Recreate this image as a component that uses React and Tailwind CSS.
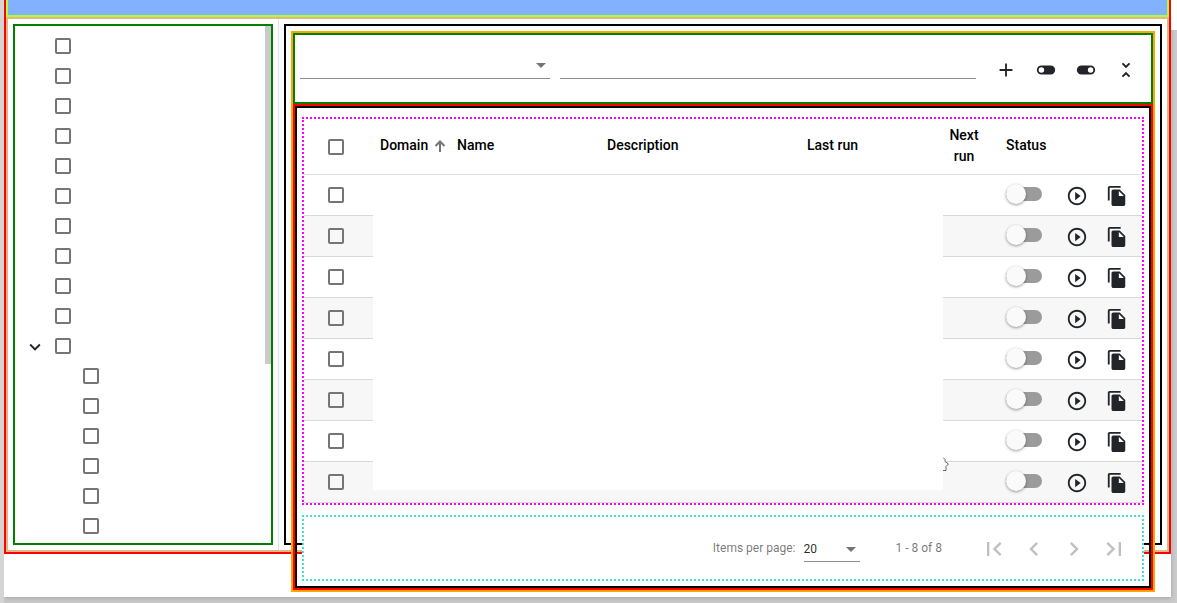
import React, { useState } from 'react';

const treeNodes = [
  ...Array.from({ length: 10 }, (_, i) => ({ id: `node-${i}`, level: 0 })),
  { id: 'node-10', level: 0, expanded: true },
  ...Array.from({ length: 6 }, (_, i) => ({ id: `child-${i}`, level: 1 })),
];

const rows = Array.from({ length: 8 }, (_, i) => ({ id: i, enabled: false }));

const paths = {
  add: 'M19 13h-6v6h-2v-6H5v-2h6V5h2v6h6v2z',
  toggleOff: 'M17,7H7A5,5 0 0,0 2,12A5,5 0 0,0 7,17H17A5,5 0 0,0 22,12A5,5 0 0,0 17,7M7,15A3,3 0 0,1 4,12A3,3 0 0,1 7,9A3,3 0 0,1 10,12A3,3 0 0,1 7,15Z',
  toggleOn: 'M17,7H7A5,5 0 0,0 2,12A5,5 0 0,0 7,17H17A5,5 0 0,0 22,12A5,5 0 0,0 17,7M17,15A3,3 0 0,1 14,12A3,3 0 0,1 17,9A3,3 0 0,1 20,12A3,3 0 0,1 17,15Z',
  collapse: 'M7.41 18.59L8.83 20 12 16.83 15.17 20l1.41-1.41L12 14l-4.59 4.59zm9.18-13.18L15.17 4 12 7.17 8.83 4 7.41 5.41 12 10l4.59-4.59z',
  play: 'M10 16.5l6-4.5-6-4.5v9zM12 2C6.48 2 2 6.48 2 12s4.48 10 10 10 10-4.48 10-10S17.52 2 12 2zm0 18c-4.41 0-8-3.59-8-8s3.59-8 8-8 8 3.59 8 8-3.59 8-8 8z',
  copy: 'M16 1H4c-1.1 0-2 .9-2 2v14h2V3h12V1zm-1 4l6 6v10c0 1.1-.9 2-2 2H7.99C6.89 23 6 22.1 6 21l.01-14c0-1.1.89-2 1.99-2h7zm-1 7h5.5L14 6.5V12z',
  expandMore: 'M16.59 8.59L12 13.17 7.41 8.59 6 10l6 6 6-6z',
  first: 'M18.41 16.59L13.82 12l4.59-4.59L17 6l-6 6 6 6zM6 6h2v12H6z',
  prev: 'M15.41 7.41L14 6l-6 6 6 6 1.41-1.41L10.83 12z',
  next: 'M10 6L8.59 7.41 13.17 12l-4.58 4.59L10 18l6-6z',
  last: 'M5.59 7.41L10.18 12l-4.59 4.59L7 18l6-6-6-6zM16 6h2v12h-2z',
};

const Icon = ({ name, className = 'size-[22px]' }) => (
  <svg viewBox="0 0 24 24" fill="currentColor" className={className} aria-hidden="true">
    <path d={paths[name]} />
  </svg>
);

const IconButton = ({ name, label, iconClass, disabled }) => (
  <button
    type="button"
    aria-label={label}
    disabled={disabled}
    className="flex size-10 shrink-0 items-center justify-center text-[#212529] disabled:text-black/25"
  >
    <Icon name={name} className={iconClass} />
  </button>
);

const Checkbox = ({ label, checked, onChange }) => (
  <input
    type="checkbox"
    aria-label={label}
    checked={checked}
    onChange={onChange}
    className="block size-4 appearance-none rounded-xs border-2 border-[#757575] checked:bg-[#757575]"
  />
);

const SlideToggle = ({ label }) => (
  <input
    type="checkbox"
    role="switch"
    aria-label={label}
    className="relative block h-3.5 w-9 appearance-none rounded-full bg-[#9b9b9b] before:absolute before:-top-[3px] before:left-0 before:size-5 before:rounded-full before:bg-[#fafafa] before:shadow-[0_1px_3px_rgba(0,0,0,0.4)] checked:before:left-4"
  />
);

const Caret = () => (
  <svg viewBox="0 0 10 5" className="pointer-events-none h-[5px] w-2.5 shrink-0 fill-[#757575]" aria-hidden="true">
    <path d="M0 0h10L5 5z" />
  </svg>
);

const Sidebar = () => {
  const [checked, setChecked] = useState({});
  const toggle = (id) => setChecked((prev) => ({ ...prev, [id]: !prev[id] }));

  return (
    <aside className="relative w-[260px] shrink-0 border-2 border-[green] pt-[5px] pb-0.5">
      <ul>
        {treeNodes.map((node) => (
          <li key={node.id} className={node.level === 1 ? 'flex h-[30px] items-center pl-7' : 'flex h-[30px] items-center'}>
            <div className="flex w-10 justify-center">
              {node.expanded && (
                <button type="button" aria-label="Collapse" className="pt-0.5 text-[#212529]">
                  <Icon name="expandMore" className="size-[22px]" />
                </button>
              )}
            </div>
            <Checkbox label={node.id} checked={!!checked[node.id]} onChange={() => toggle(node.id)} />
          </li>
        ))}
      </ul>
      {/* scrollbar thumb */}
      <div className="absolute top-0 right-0 h-[338px] w-1.5 bg-[#cacaca]" />
    </aside>
  );
};

const Toolbar = () => (
  <div className="flex items-start border-2 border-[green] bg-white px-[5px] pt-[15px] pb-3">
    <div className="flex grow items-start gap-2.5 pr-2.5">
      <div className="relative h-[29px] w-[250px] shrink-0 border-b border-[#8c8c8c]">
        <select aria-label="Domain filter" className="block h-full w-full appearance-none bg-transparent text-sm">
          <option value=""></option>
        </select>
        <div className="pointer-events-none absolute top-[13px] right-1">
          <Caret />
        </div>
      </div>
      <input
        type="text"
        aria-label="Search"
        className="block h-[29px] min-w-0 grow border-b border-[#8c8c8c] bg-transparent text-sm outline-none"
      />
    </div>
    <div className="flex h-10">
      <IconButton name="add" label="Add" />
      <IconButton name="toggleOff" label="Disable selected" />
      <IconButton name="toggleOn" label="Enable selected" />
      <IconButton name="collapse" label="Collapse" />
    </div>
  </div>
);

const TasksTable = () => {
  const [selected, setSelected] = useState([]);
  const allSelected = selected.length === rows.length;

  const toggleAll = () => setSelected(allSelected ? [] : rows.map((r) => r.id));
  const toggleRow = (id) =>
    setSelected((prev) => (prev.includes(id) ? prev.filter((x) => x !== id) : [...prev, id]));

  return (
    <div className="relative border-2 border-dotted border-[magenta] bg-white">
      <table className="w-full table-fixed border-separate border-spacing-0 text-sm">
        <colgroup>
          <col className="w-[76px]" />
          <col className="w-[77px]" />
          <col className="w-[150px]" />
          <col className="w-[200px]" />
          <col />
          <col className="w-11" />
          <col className="w-[71px]" />
          <col className="w-[85px]" />
        </colgroup>
        <thead>
          <tr className="h-14 text-left leading-[21px] text-black *:border-b *:border-[#e0e0e0] *:p-0 *:font-medium">
            <th className="pl-6!">
              <Checkbox label="Select all" checked={allSelected} onChange={toggleAll} />
            </th>
            <th className="pb-0.5!">
              <button type="button" className="flex items-center gap-1.5 font-medium">
                Domain
                <svg viewBox="0 0 12 12" className="size-3 fill-none stroke-[#757575] stroke-2" aria-hidden="true">
                  <path d="M6 12V1.5M1.5 6L6 1.5 10.5 6" />
                </svg>
              </button>
            </th>
            <th className="pb-0.5!">Name</th>
            <th className="pb-0.5!">Description</th>
            <th className="pb-0.5!">Last run</th>
            <th className="pb-0.5! text-center">Next run</th>
            <th className="pb-0.5! pl-5!">Status</th>
            <th aria-label="Actions"></th>
          </tr>
        </thead>
        <tbody>
          {rows.map((row) => (
            <tr key={row.id} className="h-[41px] *:border-b *:border-[#d9d9d9] *:p-0 even:bg-[#f7f7f7]">
              <td className="pl-6!">
                <Checkbox
                  label={`Select row ${row.id + 1}`}
                  checked={selected.includes(row.id)}
                  onChange={() => toggleRow(row.id)}
                />
              </td>
              <td></td>
              <td></td>
              <td></td>
              <td></td>
              <td></td>
              <td className="pb-0.5! pl-5!">
                <SlideToggle label={`Status of row ${row.id + 1}`} />
              </td>
              <td>
                <div className="flex h-10 items-start pt-px">
                  <IconButton name="play" label="Run" />
                  <IconButton name="copy" label="Duplicate" />
                </div>
              </td>
            </tr>
          ))}
        </tbody>
      </table>

      {/* blank sheet over the cell contents, with the tip of the pointer next to it */}
      <div className="absolute top-14 right-[199px] bottom-[13px] left-[69px] bg-white">
        <svg viewBox="0 0 7 16" className="absolute bottom-[18px] left-full h-4 w-[7px]" aria-hidden="true">
          <path d="M0 1.5L2 3.5V5.5L5.5 8L3 10.5V14.5H0z" fill="#fff" />
          <path d="M0 1.5L2 3.5V5.5L5.5 8L3 10.5V14.5H0" fill="none" stroke="#666" />
        </svg>
      </div>
    </div>
  );
};

const Paginator = () => (
  <div className="mt-2.5 flex h-[66px] items-center justify-end border-2 border-dotted border-[turquoise] bg-white pr-2 text-xs text-black/55">
    <label htmlFor="page-size" className="mr-2">Items per page:</label>
    <div className="relative mt-1 mr-9 flex h-6 w-14 items-center border-b border-[#8c8c8c]">
      <select id="page-size" defaultValue="20" className="h-full w-full appearance-none bg-transparent pb-0.5 text-black/85">
        <option value="20">20</option>
      </select>
      <div className="pointer-events-none absolute right-1">
        <Caret />
      </div>
    </div>
    <div className="mr-8">1 - 8 of 8</div>
    <div className="flex pt-0.5">
      <IconButton name="first" label="First page" iconClass="size-7" disabled />
      <IconButton name="prev" label="Previous page" iconClass="size-7" disabled />
      <IconButton name="next" label="Next page" iconClass="size-7" disabled />
      <IconButton name="last" label="Last page" iconClass="size-7" disabled />
    </div>
  </div>
);

const App = () => {
  return (
    <div className="flex min-h-screen items-start overflow-hidden border-l-4 border-[#d4d4d4] bg-[#cbcbcb] pb-1.5 font-[Roboto,sans-serif]">
      <div className="min-w-0 grow bg-white pb-[43px] shadow-[0_1px_5px_rgba(0,0,0,0.2)]">
        <div className="border-2 border-t-0 border-[red]">
          <header className="h-[17px] border-2 border-t-0 border-[greenyellow] bg-[#82b1ff]" />
          <div className="flex border-2 border-[burlywood]">
            <div className="border-r border-[#e0e0e0] p-[5px]">
              <Sidebar />
            </div>
            <div className="flex min-w-0 grow p-[5px]">
              {/* the panel keeps the height of the sidebar, its content runs out below */}
              <main className="min-w-0 grow border-2 border-black p-[5px] contain-size">
                <div className="border-2 border-[orange]">
                  <Toolbar />
                  <div className="border-2 border-[red]">
                    <div className="border-2 border-black px-[5px] pt-[9px] pb-[5px]">
                      <TasksTable />
                      <Paginator />
                    </div>
                  </div>
                </div>
              </main>
            </div>
          </div>
        </div>
      </div>
      <div className="h-[30px] w-1.5 shrink-0 bg-white" />
    </div>
  );
};

export default App;
